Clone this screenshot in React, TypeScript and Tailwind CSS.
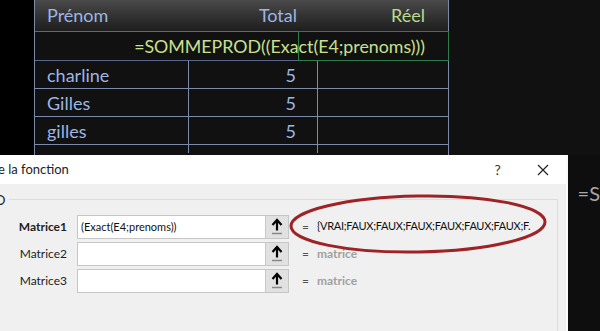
import React from "react";

const rows = [
  { name: "charline", total: "5" },
  { name: "Gilles", total: "5" },
  { name: "gilles", total: "5" },
];

const args = [
  { label: "Matrice1", value: "(Exact(E4;prenoms))", result: "{VRAI;FAUX;FAUX;FAUX;FAUX;FAUX;FAUX;F.", active: true },
  { label: "Matrice2", value: "", result: "matrice", active: false },
  { label: "Matrice3", value: "", result: "matrice", active: false },
];

const ArrowButton = () => (
  <div className="w-[23px] h-full bg-[#e1e1e1] border-l border-[#c8c8c8] flex items-center justify-center">
    <svg width="12" height="17" viewBox="0 0 12 17">
      <path d="M6 2.5 L6 12.5" stroke="#000" strokeWidth="2.2" />
      <path d="M1.5 7 L6 2 L10.5 7" stroke="#000" strokeWidth="2.2" fill="none" />
      <path d="M1 15.5 L11 15.5" stroke="#888" strokeWidth="1.5" />
    </svg>
  </div>
);

export default function App() {
  const excel = { fontFamily: "Lato, 'Open Sans', sans-serif" };
  const ui = { fontFamily: "Lato, 'Noto Sans', sans-serif" };

  return (
    <div className="relative w-[600px] h-[331px] overflow-hidden bg-[#0e0e0e]">
      {/* spreadsheet */}
      <div className="flex h-[155px]" style={excel}>
        <div className="w-[34px] bg-black" />
        <div className="w-[415px] border-l border-r border-[#7d8bab] bg-[#111]">
          <div className="h-[31px] grid grid-cols-[153px_130px_130px] items-center text-[18px] bg-gradient-to-b from-[#4a4a4a] to-[#1e1e1e]">
            <span className="pl-[12px] text-[#9db6e4]">Prénom</span>
            <span className="text-right pr-[21px] text-[#9db6e4]">Total</span>
            <span className="text-right pr-[23px] text-[#b9dc8e]">Réel</span>
          </div>
          <div className="relative h-[30px] border-t border-b border-[#5a6788] flex items-center justify-end pr-[23px] text-[17.8px] text-[#c9e08e]">
            =SOMMEPROD((Exact(E4;prenoms)))
            <div className="absolute right-[-1px] top-[-1px] bottom-[-1px] w-[151px] border border-[#2f7d48]" />
          </div>
          {rows.map((r) => (
            <div key={r.name} className="h-[28px] grid grid-cols-[153px_130px_130px] border-b border-[#7d8bab] text-[18px] text-[#9db6e4]">
              <span className="pl-[12px] leading-[28px]">{r.name}</span>
              <span className="text-right pr-[21px] leading-[28px] border-l border-r border-[#7d8bab]">{r.total}</span>
              <span />
            </div>
          ))}
          <div className="h-[8px] grid grid-cols-[153px_130px_130px]">
            <span />
            <span className="border-l border-r border-[#7d8bab]" />
            <span />
          </div>
        </div>
        <div className="flex-1 bg-[#111]" />
      </div>

      {/* dialog */}
      <div className="flex h-[176px]">
        <div className="w-[575px] bg-[#f0f0f0] border-r-2 border-[#fafafa] flex flex-col" style={ui}>
          <div className="h-[29px] bg-white flex items-center text-[13px] text-[#222]">
            <span className="ml-[-2px]">e la fonction</span>
            <span className="ml-auto w-[10px] text-[14px] text-[#333] mr-[32px]">?</span>
            <svg width="12" height="12" viewBox="0 0 12 12" className="mr-[17px]">
              <path d="M1 1 L11 11 M11 1 L1 11" stroke="#222" strokeWidth="1.2" />
            </svg>
          </div>
          <div className="flex-1 pt-[15px] pr-[8px]">
            <div className="h-full border-t border-r border-[#dcdcdc] relative">
              <span className="absolute left-[-5px] top-[-9px] bg-[#f0f0f0] pr-[4px] text-[13px] text-[#222] leading-[18px]">O</span>
              <div className="pt-[15px] flex flex-col gap-[4px]">
                {args.map((a) => (
                  <div key={a.label} className="flex items-center h-[23px]">
                    <span className={`w-[67px] text-right text-[12px] text-[#222] ${a.active ? "font-bold" : ""}`}>{a.label}</span>
                    <div className="ml-[10px] w-[212px] h-[24px] bg-white border border-[#c6c6c6] flex">
                      <span className="flex-1 pl-[3px] text-[11px] leading-[21px] text-[#111]">{a.value}</span>
                      <ArrowButton />
                    </div>
                    <span className="ml-[13px] text-[12px] text-[#555]">=</span>
                    <span className={`ml-[8px] ${a.active ? "text-[11px] tracking-[-0.3px] text-[#111]" : "text-[12px] text-[#a0a0a0] font-bold"}`}>{a.result}</span>
                  </div>
                ))}
              </div>
            </div>
          </div>
        </div>
        <div className="flex-1 bg-[#0e0e0e] pt-[23px] pl-[10px]">
          <span className="text-[20px] text-[#a8a8a8]" style={excel}>=S</span>
        </div>
      </div>

      {/* red highlight ellipse */}
      <svg className="absolute left-0 top-0 pointer-events-none" width="600" height="331" viewBox="0 0 600 331">
        <ellipse cx="418" cy="224" rx="127" ry="28" fill="none" stroke="#9e2326" strokeWidth="3" transform="rotate(-1 418 224)" />
      </svg>
    </div>
  );
}
